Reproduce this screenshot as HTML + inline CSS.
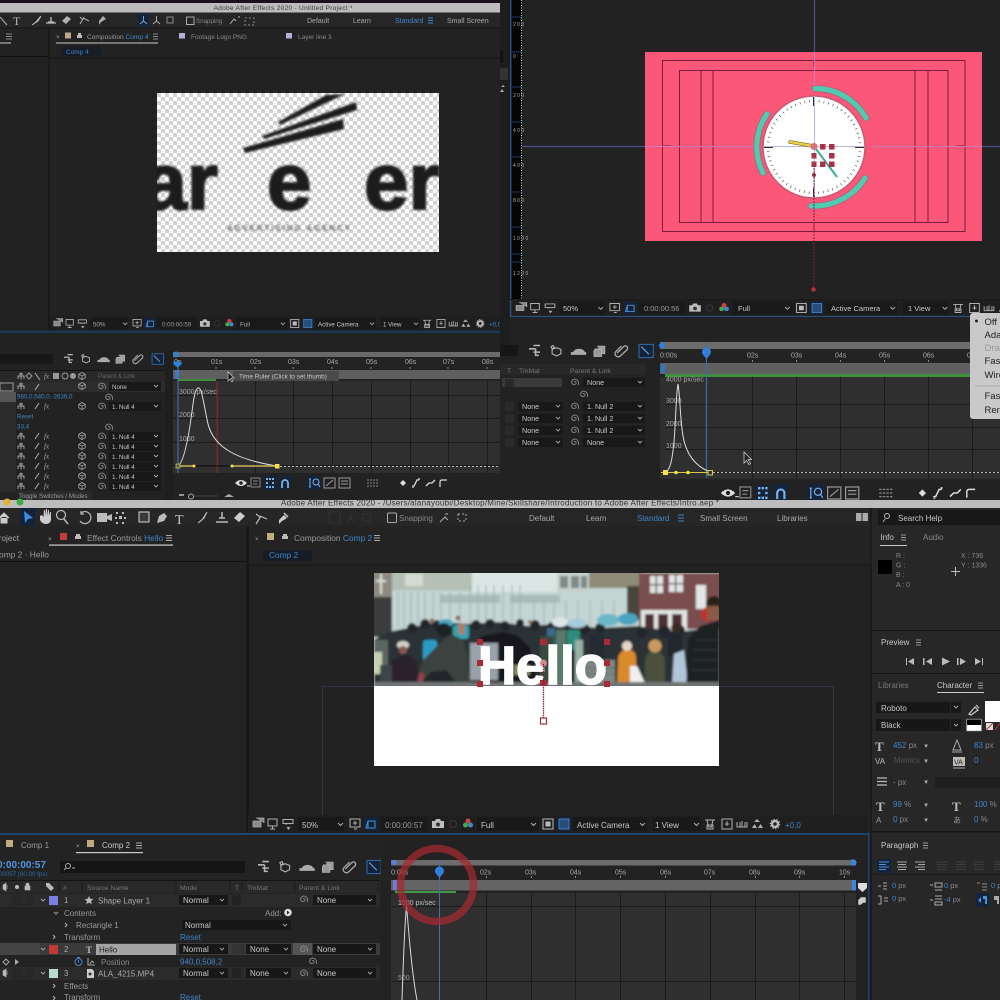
<!DOCTYPE html>
<html><head><meta charset="utf-8"><title>After Effects</title>
<style>
html,body{margin:0;padding:0;background:#1e1e1e;width:1000px;height:1000px;overflow:hidden}
svg{display:block;filter:blur(.3px)}
text{font-family:"Liberation Sans",sans-serif;fill:#a8a8a8;font-size:7px}
.s{font-size:6.2px}.m{font-size:8px}.l{font-size:8.4px}
.b{fill:#3f86c8}.d{fill:#666}.w{fill:#c8c8c8}
.ic{fill:none;stroke:#b0b0b0;stroke-width:1}
.if{fill:#b0b0b0}
.g{stroke:#1b1b1b;stroke-width:1;fill:none}
</style></head><body>
<svg width="1000" height="1000" viewBox="0 0 1000 1000" xmlns="http://www.w3.org/2000/svg">
<defs>
<pattern id="chk" width="8" height="8" patternUnits="userSpaceOnUse" x="157" y="93"><rect width="8" height="8" fill="#fff"/><rect width="4" height="4" fill="#d2d2d2"/><rect x="4" y="4" width="4" height="4" fill="#d2d2d2"/></pattern>
<clipPath id="imgc"><rect x="157" y="93" width="282" height="159"/></clipPath>
<clipPath id="photo"><rect x="374" y="573" width="345" height="113"/></clipPath>
<filter id="b1" x="-10%" y="-10%" width="120%" height="120%"><feGaussianBlur stdDeviation="1.100"/></filter>
<filter id="b2" x="-10%" y="-10%" width="120%" height="120%"><feGaussianBlur stdDeviation="1"/></filter>
<g id="sw"><path d="M0 0c1.2-1 2.6 0 2 1.500c-.8 1.800-4 1.300-4.300-1.100c-.3-2.500 2.300-4 4.500-3c2 1 3 3.300 2 5.500" fill="none" stroke="#8a8a8a" stroke-width=".9"/></g>
<path id="ch" d="M-2-1l2 2 2-2" fill="none" stroke="#aaa" stroke-width=".9"/>
<g id="cube"><path d="M0-3.500l3.200 1.800v3.500l-3.200 1.800-3.200-1.800v-3.500zM-3.200-1.700l3.200 1.800 3.200-1.800M0 .1v3.500" fill="none" stroke="#aaa" stroke-width=".8"/></g>
<g id="sh"><path d="M-3 3v-3h6v3M0-3.500v7M-2-2h4" fill="none" stroke="#aaa" stroke-width=".9"/></g>
<g id="vt">
 <rect x="-9" y="-9" width="620" height="18" fill="#1f1f1f"/>
 <path d="M4-5h8v5M1-2h8v6h-8z" fill="#8a8a8a" stroke="#aaa" stroke-width=".8" transform="translate(-5 -1)"/>
 <path d="M11-5h9v7h-9zM13 5h5M15.500 2v3" class="ic"/>
 <path d="M26-4.500h10v4h-10zM28-.5a2 2 0 0 0 2.500 0M32-.5a2 2 0 0 0 2 0" class="ic" stroke-width="1.500"/><path d="M29.500 3l2 3 2-3z" class="if"/>
 <rect x="41" y="-7" width="46" height="14" fill="#191919"/>
 <path d="M81-1l2.500 2.500 2.500-2.500" class="ic"/>
 <path d="M93-5h10v8h-10zM98-3v4M96-1h4M97 5h3" class="ic"/>
 <rect x="107" y="-7" width="14" height="14" fill="#13243a"/><path d="M109 4l2-7h7v7zM111-3v7" fill="none" stroke="#4d8fd0"/>
 <rect x="123" y="-7" width="48" height="14" fill="#1a1a1a"/>
 <path d="M175-3h3l1-2h4l1 2h3v7h-12z" fill="#bdbdbd"/><circle cx="181" cy="0.500" r="2" fill="#333"/>
 <circle cx="196" cy="0" r="3.500" fill="none" stroke="#3a3a3a"/>
 <circle cx="211" cy="-3" r="2.500" fill="#c44"/><circle cx="208.500" cy="1" r="2.500" fill="#4a4"/><circle cx="213.500" cy="1" r="2.500" fill="#48c"/>
 <rect x="220" y="-7" width="62" height="14" fill="#191919"/>
 <path d="M274-1l2.500 2.500 2.500-2.500" class="ic"/>
 <rect x="286" y="-5" width="10" height="10" fill="none" stroke="#bbb"/><rect x="288.500" y="-2.500" width="5" height="5" fill="#bbb"/>
 <rect x="300" y="-7" width="14" height="14" fill="#13243a"/><rect x="302" y="-5" width="10" height="10" fill="#284d78" stroke="#4d8fd0" stroke-width=".8"/>
 <rect x="316" y="-7" width="74" height="14" fill="#191919"/>
 <path d="M383-1l2.500 2.500 2.500-2.500" class="ic"/>
 <rect x="396" y="-7" width="47" height="14" fill="#191919"/>
 <path d="M437-1l2.500 2.500 2.500-2.500" class="ic"/>
 <path d="M448-4h10M450-4l1.500 7h3l1.500-7M450 1h6v4h-6z" class="ic"/>
 <path d="M465-5h10v10h-10zM470-3v5M468 0h4" class="ic"/>
 <path d="M480-2v5h10v-5M483 3v-5M485 3v-6M488 3v-5" class="ic"/>
 <path d="M500-5l3 3h-6zM495 4l2.500-4 2.500 4zM501 4l2.500-4 2.500 4z" class="if"/>
 <circle cx="518" cy="0" r="3" fill="none" stroke="#bbb" stroke-width="2.400"/><circle cx="518" cy="0" r="4.800" fill="none" stroke="#bbb" stroke-width="1" stroke-dasharray="1.500 1.500"/>
</g>
<g id="tli">
 <path d="M0-2h6M4-5h6M4 1h6M6-2v6h3" fill="none" stroke="#b5b5b5" stroke-width="1.400"/>
 <path d="M22-5l1 2-2 1-1-2zM25-3l4 1.500v4l-4 2-4-2v-4z" fill="none" stroke="#b5b5b5"/>
 <path d="M40 1a6 5 0 0 1 11 0zM38 1h14v2.500h-14zM45-5v2" fill="#aaa"/>
 <path d="M60-2h6v7h-7v-5zM62-4.500h7v7h-3" fill="#999" stroke="#bbb" stroke-width=".6"/>
 <path d="M80 3l6-6a2 2 0 0 1 3 3l-6.500 6a3 3 0 0 1-4-4l5.500-5.500" fill="none" stroke="#aaa" stroke-width="1.200" transform="translate(0 -1)"/>
 <rect x="100" y="-6" width="13" height="12" fill="#13243a" stroke="#2f68a0"/><path d="M102-4l7 7" stroke="#6ea6d8" fill="none"/>
</g>
<g id="gb">
 <path d="M-6 0q6-6 12 0q-6 6-12 0z" fill="#ddd"/><circle r="1.800" fill="#222"/><path d="M6 3h3" stroke="#ccc"/>
 <rect x="10" y="-5" width="9" height="9" fill="none" stroke="#888"/><path d="M12-2h5M12 1h4" stroke="#888"/>
 <rect x="23" y="-7" width="12" height="14" fill="#12233a"/><g fill="#7fb0e0"><rect x="25" y="-5" width="2" height="2"/><rect x="28" y="-5" width="2" height="2"/><rect x="31" y="-5" width="2" height="2"/><rect x="25" y="-1" width="2" height="2"/><rect x="31" y="-1" width="2" height="2"/><rect x="25" y="3" width="2" height="2"/><rect x="28" y="3" width="2" height="2"/><rect x="31" y="3" width="2" height="2"/></g>
 <rect x="38" y="-7" width="12" height="14" fill="#12233a"/><path d="M41 5v-5a3 3 0 0 1 6 0v5" fill="none" stroke="#7fb0e0" stroke-width="1.800"/>
 <rect x="66" y="-7" width="14" height="14" fill="#12233a"/><path d="M69-4v8M68-4h2M68 4h2" stroke="#7fb0e0" fill="none"/><circle cx="75" cy="-1" r="3" fill="none" stroke="#7fb0e0"/><path d="M77 1l2 3" stroke="#7fb0e0"/>
 <rect x="83" y="-5" width="11" height="10" fill="none" stroke="#999"/><path d="M85 3l7-6" stroke="#999"/>
 <rect x="98" y="-5" width="11" height="10" fill="none" stroke="#999"/><path d="M100-2h7M100 1h7" stroke="#999"/>
 <path d="M126-3h12M126 0h12M126 3h12" stroke="#888" stroke-dasharray="2 1"/>
 <path d="M162-3l3 3-3 3-3-3z" fill="#ddd"/><path d="M171 3h2l3-6h2M172 5v-1M178-3v-2" stroke="#ddd" fill="none" stroke-width="1.300"/>
 <path d="M185 3l3-3h3l3-3" stroke="#ddd" fill="none" stroke-width="1.300"/>
 <path d="M199 4v-5q0-2 2-2h5" stroke="#ddd" fill="none" stroke-width="1.200"/>
</g>
</defs>

<rect width="1000" height="1000" fill="#1c1c1c"/>

<!-- TOP LEFT -->
<rect width="510" height="3" fill="#1a1020"/>
<rect y="3" width="510" height="9.500" fill="#bcbcbc"/>
<text x="283" y="10" text-anchor="middle" style="fill:#3a3a3a;font-size:6.600px" textLength="139">Adobe After Effects 2020 - Untitled Project *</text>
<rect y="12.500" width="510" height="15" fill="#262626"/>
<g>
 <path d="M0 17l7 8" class="ic"/>
 <text x="13" y="25" style="font-family:'Liberation Serif',serif;font-size:12px;fill:#bbb">T</text>
 <path d="M32 25l4-3 5-6-3 5z" class="if" stroke="#bbb"/>
 <path d="M46 23h10M51 17v5M48 22h6" stroke="#bbb" fill="none" stroke-width="1.300"/>
 <path d="M62 21l5-5 4 3-5 5z" class="if"/>
 <path d="M80 24l4-7M83 18l6 3M80 17l3 3" class="ic"/>
 <path d="M99 21l4-5 3 3-5 3-2 3z" class="if"/>
 <rect x="138" y="14" width="11" height="12" fill="#13243a"/><path d="M143.500 16v5M143.500 21l-3.500 3M143.500 21l3.500 3" stroke="#6ea6d8" fill="none"/>
 <path d="M156.500 16v5l-3.500 3M156.500 21l3.500 3" class="ic"/>
 <path d="M167 17h6v6h-6z" fill="none" stroke="#888"/>
 <rect x="186.500" y="17" width="7.500" height="7.500" fill="none" stroke="#aaa"/>
 <path d="M230 24l4-5 2 2M240 17h-2" class="ic"/><path d="M245 18h9v7h-9z" fill="none" stroke="#888" stroke-dasharray="2 2"/>
</g>
<text x="196" y="23" class="s d" style="fill:#888">Snapping</text>
<text x="307" y="23">Default</text><text x="353" y="23">Learn</text><text x="395" y="23" class="b">Standard</text>
<path d="M428 18h5M428 20.500h5M428 23h5" stroke="#3f86c8"/>
<text x="447" y="23">Small Screen</text>
<rect y="27" width="510" height="30" fill="#222"/>
<rect x="0" y="27.500" width="510" height="1" fill="#151515"/>
<path d="M6 34h6M6 36.500h6M6 39h6" stroke="#888"/><rect x="0" y="42.500" width="11" height="1" fill="#ccc"/>
<text x="56" y="39" class="s">×</text>
<rect x="65" y="32.500" width="6" height="6" fill="#b9a58a"/><path d="M77 38v-3h5v3zM78 35v-2h3v2" fill="#bbb"/>
<text x="87" y="39" class="s" style="fill:#999;font-size:6.600px">Composition <tspan class="b">Comp 4</tspan></text>
<path d="M153 34h5M153 36.500h5M153 39h5" stroke="#888"/><rect x="56" y="42.500" width="102" height="1" fill="#ccc"/>
<rect x="179" y="33" width="6" height="5.500" fill="#b5aedb"/><text x="191" y="39" class="s" style="fill:#888;font-size:6.500px">Footage Logo PNG</text>
<rect x="286" y="33" width="6" height="5.500" fill="#b5aedb"/><text x="298" y="39" class="s" style="fill:#888;font-size:6.500px">Layer line 3</text>
<rect x="62" y="47" width="39" height="9" fill="#171c26"/><text x="66" y="54" class="s b" style="font-size:6.500px">Comp 4</text>
<rect x="0" y="56" width="48" height="1" fill="#111"/><rect x="50" y="58" width="460" height="1" fill="#191919"/>
<rect x="48" y="27" width="2" height="305" fill="#191919"/>
<rect x="0" y="57" width="48" height="275" fill="#212121"/>
<rect x="50" y="59" width="455" height="259" fill="#222"/>
<rect x="157" y="93" width="282" height="159" fill="url(#chk)"/>
<g clip-path="url(#imgc)"><g filter="url(#b1)" fill="#1c1c1c">
 <polygon points="243,148 343,119 344,129 245,153"/>
 <polygon points="262,136 356,102 357,110 264,139"/>
 <polygon points="278,122 326,95 345,94 280,125"/>
 <text x="218" y="209" text-anchor="end" style="font-size:80px;font-weight:bold;fill:#1c1c1c;stroke:#1c1c1c;stroke-width:2px">ar</text>
 <text x="267" y="209" style="font-size:80px;font-weight:bold;fill:#1c1c1c;stroke:#1c1c1c;stroke-width:2px">e</text>
 <text x="364" y="209" style="font-size:80px;font-weight:bold;fill:#1c1c1c;stroke:#1c1c1c;stroke-width:2px">er</text>
 <text x="227" y="231" style="font-size:8px;font-weight:bold;fill:#666;letter-spacing:1.900px">ADVERTISING AGENCY</text>
</g></g>
<use href="#vt" transform="translate(57 323.500) scale(.817)"/>
<text x="93" y="326.500" class="s" style="fill:#aaa">50%</text>
<text x="162" y="326.500" class="s" style="fill:#999">0:00:00:59</text>
<text x="240" y="326.500" class="s">Full</text>
<text x="318" y="326.500" class="s w">Active Camera</text>
<text x="383" y="326.500" class="s w">1 View</text>
<text x="489" y="326.500" class="s b">+0,0</text>
<rect y="330.500" width="510" height="2.500" fill="#1c3654"/>
<rect y="333" width="510" height="167" fill="#222"/>
<!-- TL timeline -->
<rect x="0" y="354" width="53" height="10" fill="#171717"/>
<use href="#tli" transform="translate(64 359) scale(.88)"/>
<rect x="0" y="371" width="170" height="11" fill="#282828"/>
<rect x="0" y="370" width="175" height="1" fill="#141414"/>
<g class="s" style="fill:#777">
 <use href="#sh" x="21" y="376"/><path d="M29 373l3 3-3 3-3-3z" fill="none" stroke="#999"/><path d="M35 373l5 7" class="ic"/>
 <text x="44" y="378.500" style="font-family:'Liberation Serif',serif;font-style:italic;font-size:7px">fx</text>
 <rect x="53" y="373" width="6" height="6" fill="#999"/><circle cx="65" cy="376" r="3" fill="none" stroke="#999"/><circle cx="73" cy="376" r="3" fill="#999"/><use href="#cube" x="82" y="376"/>
</g>
<text x="98" y="378" class="s" style="fill:#666">Parent &amp; Link</text>
<rect x="0" y="382" width="170" height="10" fill="#2d2d2d"/>
<rect x="0" y="383" width="13" height="8" fill="none" stroke="#999"/>
<rect x="0" y="392" width="16" height="10" fill="#555"/>
<rect x="0" y="402" width="16" height="90" fill="#2b2b2b"/>
<use href="#sh" x="21" y="386"/><path d="M35 390l4-6" class="ic"/><use href="#cube" x="82" y="386"/><use href="#sw" x="101" y="386"/>
<rect x="109" y="382" width="52" height="9" fill="#181818"/><text x="112" y="389" class="s w">None</text><use href="#ch" x="156" y="386"/>
<text x="17" y="398.500" class="s b">960,0,540,0,-2636,0</text><use href="#sw" x="108" y="397"/>
<text x="17" y="418.500" class="s b">Reset</text>
<text x="17" y="428.500" class="s b">33,4</text><use href="#sw" x="108" y="427"/>
<!-- null rows -->
<g id="nr"><use href="#sh" x="21" y="406"/><path d="M35 409l4-6" class="ic"/><text x="44" y="408.500" style="font-family:'Liberation Serif',serif;font-style:italic;font-size:7px">fx</text><use href="#cube" x="82" y="406"/><use href="#sw" x="101" y="406"/><rect x="109" y="402" width="52" height="9" fill="#181818"/><text x="112" y="409" class="s w">1. Null 4</text><use href="#ch" x="156" y="406"/></g>
<use href="#nr" y="30"/><use href="#nr" y="40"/><use href="#nr" y="50"/><use href="#nr" y="60"/><use href="#nr" y="70"/><use href="#nr" y="80"/>
<rect x="17" y="491" width="75" height="9" fill="#2a2a2a"/><text x="19" y="498" class="s" style="fill:#999">Toggle Switches / Modes</text>
<rect x="165" y="350" width="8" height="150" fill="#1f1f1f"/>
<rect x="173" y="352" width="327" height="5" fill="#6a6a6a"/><circle cx="176" cy="354.500" r="3" fill="#3a7fc4"/>
<rect x="173" y="358" width="327" height="11" fill="#232323"/>
<g class="s" style="fill:#888"><text x="211" y="364">01s</text><text x="250" y="364">02s</text><text x="288" y="364">03s</text><text x="327" y="364">04s</text><text x="366" y="364">05s</text><text x="405" y="364">06s</text><text x="443" y="364">07s</text><text x="482" y="364">08s</text><text x="174" y="364">0s</text></g>
<path d="M216 367v2M255 367v2M293 367v2M332 367v2M371 367v2M410 367v2M448 367v2M487 367v2" stroke="#888"/>
<rect x="173" y="370" width="327" height="9" fill="#5f5f5f"/>
<rect x="175" y="370" width="4" height="9" fill="#3f78bc"/>
<rect x="178" y="379" width="38" height="2" fill="#3f8f3f"/>
<rect x="173" y="381" width="327" height="92" fill="#2f2f2f"/>
<path d="M255.500 381v92M293.500 381v92M332.500 381v92M371.500 381v92M410.500 381v92M448.500 381v92M487.500 381v92M216.500 381v92M173 395.500h327M173 418.500h327M173 442.500h327M173 465.500h327" class="g"/>
<path d="M178 360v113" stroke="#3f78bc"/><path d="M217 381v92" stroke="#a03434"/>
<path d="M173.500 361.500h8v3l-4 3-4-3z" fill="#2f80d8"/>
<g class="s" style="fill:#999"><text x="179" y="394">3000 px/sec</text><text x="179" y="417">2000</text><text x="179" y="441">1000</text></g>
<path d="M178 466c6-4 11-30 15-62c2-14 4-17 6-16c3 1 5 18 9 36c6 24 30 36 69 42" fill="none" stroke="#dcdcdc" stroke-width="1"/>
<path d="M176 466h101" stroke="#111"/><path d="M178 466h16M232 466h45" stroke="#c9b95a" stroke-width="1.500"/>
<rect x="176" y="464" width="4" height="4" fill="#555" stroke="#ddd050" stroke-width=".7"/><circle cx="194" cy="466" r="1.500" fill="#f2e14a"/><circle cx="232" cy="466" r="1.500" fill="#f2e14a"/><rect x="275" y="464" width="4.500" height="4.500" fill="#f2e14a"/>
<path d="M280 466.500h220" stroke="#bbb" stroke-dasharray="2 2"/>
<rect x="233" y="371" width="106" height="10" fill="#4a4a4a"/><text x="239" y="378.500" class="s w" style="font-size:6.400px">Time Ruler (Click to set thumb)</text>
<path d="M228 372v9l2-2 2 3 1-1-2-3h3z" fill="#111" stroke="#ddd" stroke-width=".6"/>
<use href="#gb" transform="translate(241 483)"/>
<path d="M179 495h5" stroke="#bbb" stroke-width="1.500"/><circle cx="191" cy="496.500" r="2.500" fill="none" stroke="#aaa"/><path d="M194 496h24" stroke="#444"/><path d="M224 497l5-3 5 3z" fill="#aaa"/>

<!-- TOP RIGHT -->
<rect x="500" y="0" width="10" height="345" fill="#1d1d1d"/>
<rect x="500" y="50" width="3" height="12" fill="#111"/><rect x="500" y="68" width="8" height="12" fill="#333"/>
<path d="M503 85l2 2h-4zM500 92l2-3 2 3z" fill="#aaa"/>
<rect x="510" y="0" width="490" height="316" fill="#222"/>
<rect x="510" y="0" width="1.500" height="316" fill="#2a5080"/>
<rect x="511.500" y="0" width="10.500" height="300" fill="#050505"/>
<path d="M521.500 0v300" stroke="#ddd" stroke-dasharray="1 1.500"/>
<g style="font-size:5px;fill:#777"><text x="513" y="26" style="font-size:5px">2 0 0</text><text x="513" y="58" style="font-size:5px">0</text><text x="513" y="97" style="font-size:5px">2 0 0</text><text x="513" y="132" style="font-size:5px">4 0 0</text><text x="513" y="167" style="font-size:5px">4 0 0</text><text x="513" y="202" style="font-size:5px">8 0 0</text><text x="513" y="240" style="font-size:5px">1 0 0 0</text><text x="513" y="275" style="font-size:5px">1 2 0 0</text></g>
<path d="M512 17h10M512 52h10M512 87h10M512 122h10M512 157h10M512 192h10M512 227h10M512 254h10M512 262h10" stroke="#2a4a70" stroke-width=".7"/>
<path d="M814.500 0v52M522 146.500h123M982 146.500h18" stroke="#4d4d8a" stroke-width="1.200"/>
<rect x="645" y="52" width="337" height="189" fill="#fb5779"/>
<g fill="none" stroke="#7d1d3e" stroke-width="1">
 <rect x="662.500" y="60.500" width="302.500" height="171"/>
 <rect x="679.500" y="70.500" width="268.500" height="152"/>
 <path d="M701 70v152M713 70v152M915 70v152M928 70v152"/>
 <path d="M662 146h9M956 146h9M814 61v6M814 222v10"/>
</g>
<path d="M814.500 52v37M645 146.500h110M873 146.500h109" stroke="#cf78b4" stroke-width="1"/>
<circle cx="814" cy="147" r="51" fill="#fff" stroke="#c65a75" stroke-width="1.500"/>
<circle cx="814" cy="147" r="46" fill="none" stroke="#444" stroke-width="2.500" stroke-dasharray=".6 4.218" stroke-dashoffset=".3"/>
<path d="M814 97v9M814 188v9M764 147h9M855 147h9" stroke="#111" stroke-width="1.800"/>
<path d="M814.500 96v100M764 146.500h100" stroke="#b8b8d6" stroke-width="1"/>
<g fill="none" stroke-linecap="round">
<path d="M815 88.500A58.500 58.500 0 0 1 866 118" stroke="#c05a78" stroke-width="7"/><path d="M815 88.500A58.500 58.500 0 0 1 866 118" stroke="#4fcbb0" stroke-width="5.200"/>
<path d="M767 114A58 58 0 0 0 763 173" stroke="#c05a78" stroke-width="7"/><path d="M767 114A58 58 0 0 0 763 173" stroke="#4fcbb0" stroke-width="5.200"/>
<path d="M811 206A60 60 0 0 0 865 178" stroke="#c05a78" stroke-width="7"/><path d="M811 206A60 60 0 0 0 865 178" stroke="#4fcbb0" stroke-width="5.200"/>
</g>
<path d="M790 142l23 4" stroke="#7a6a20" stroke-width="3.500" stroke-linecap="round"/><path d="M790 142l23 4" stroke="#ecd24a" stroke-width="2.200" stroke-linecap="round"/>
<path d="M816 149l21 28" stroke="#3dac96" stroke-width="2"/>
<g fill="#a93248"><circle cx="814" cy="146.500" r="3.500" fill="#d9707f"/><rect x="820" y="144" width="5.500" height="5.500"/><rect x="829" y="144" width="5.500" height="5.500"/><rect x="811.500" y="153" width="5" height="5.500"/><rect x="829" y="153" width="5.500" height="5.500"/><rect x="811.500" y="161.500" width="5" height="5.500"/><rect x="820" y="161.500" width="5.500" height="5.500"/><rect x="829" y="161.500" width="5.500" height="5.500"/><circle cx="814" cy="175" r="2"/></g>
<path d="M814 168v122" stroke="#7d1d3e" stroke-width="1" stroke-dasharray="2 1"/><circle cx="813.500" cy="289.500" r="2.200" fill="#b5304a"/>
<use href="#vt" transform="translate(520 308) scale(.967 .9)"/>
<path d="M510 299.500h490" stroke="#1a1a1a"/>
<text x="563" y="311" class="m w" style="font-size:7.500px">50%</text>
<text x="644" y="311" class="m" style="font-size:7.500px;fill:#999">0:00:00:56</text>
<text x="738" y="311" class="m w" style="font-size:7.500px">Full</text>
<text x="831" y="311" class="m w" style="font-size:7.500px">Active Camera</text>
<text x="908" y="311" class="m w" style="font-size:7.500px">1 View</text>
<path d="M510.500 300v16.500H1000" fill="none" stroke="#2a5080" stroke-width="1.300"/>
<rect x="510" y="318" width="490" height="182" fill="#222"/>
<rect x="500" y="345" width="18" height="11" fill="#161616"/>
<use href="#tli" transform="translate(529 351) scale(1.100)"/>
<rect x="660" y="342" width="340" height="7" fill="#6c6c6c"/><circle cx="662" cy="345.500" r="3" fill="#2f80d8"/>
<rect x="660" y="349" width="340" height="14" fill="#232323"/>
<g style="fill:#999"><text x="660" y="357.500" style="font-size:7px;fill:#aaa">0:00s</text><text x="747" y="357.500" style="fill:#aaa">02s</text><text x="791" y="357.500" style="fill:#aaa">03s</text><text x="835" y="357.500" style="fill:#aaa">04s</text><text x="879" y="357.500" style="fill:#aaa">05s</text><text x="923" y="357.500" style="fill:#aaa">06s</text><text x="967" y="357.500" style="fill:#aaa">0</text></g>
<path d="M752.500 360v2M796.500 360v2M840.500 360v2M884.500 360v2M928.500 360v2" stroke="#888"/>
<rect x="660" y="363" width="340" height="11" fill="#606060"/><rect x="661" y="364" width="4" height="9" rx="1.500" fill="#2f78c8"/>
<rect x="665" y="374" width="335" height="3" fill="#3f8f3f"/>
<rect x="660" y="377" width="340" height="102" fill="#2f2f2f"/>
<path d="M752.500 377v102M796.500 377v102M840.500 377v102M884.500 377v102M928.500 377v102M972.500 377v102M665 404.500h335M665 427.500h335M665 449.500h335M665 472.500h335" class="g"/>
<path d="M706.500 343v135" stroke="#3a6ea8" stroke-width="1.200"/>
<path d="M702 352a4.500 4.500 0 0 1 9 0c0 2-2 4-4.500 7c-2.500-3-4.500-5-4.500-7z" fill="#2f80d8"/>
<g style="fill:#999"><text x="666" y="381.500" style="fill:#aaa">4000 px/sec</text><text x="666" y="403">3000</text><text x="666" y="426">2000</text><text x="666" y="448">1000</text></g>
<path d="M666 472c4-3 6-10 8-30c2-24 2-48 4-58c2 10 2 34 5 52c3 18 12 30 27 36" fill="none" stroke="#dcdcdc" stroke-width="1"/>
<path d="M661 472.500h49" stroke="#d8c94a"/><rect x="663" y="470" width="5" height="5" fill="#f2e14a"/><circle cx="676" cy="472.500" r="1.800" fill="#f2e14a"/><circle cx="688" cy="472.500" r="1.800" fill="#f2e14a"/><rect x="708" y="470.500" width="4.500" height="4.500" fill="#333" stroke="#d8c94a"/>
<path d="M713 472.500h287" stroke="#bbb" stroke-dasharray="2 2"/>
<path d="M744 452v11l2.500-2.500 2.500 4 1.500-1-2.500-4h3.500z" fill="#222" stroke="#ddd" stroke-width=".7"/>
<use href="#gb" transform="translate(728 493) scale(1.200)"/>
<rect x="500" y="364" width="146" height="11" fill="#282828"/>
<text x="507" y="373" class="s" style="fill:#777;font-size:6.800px">T</text><text x="519" y="373" class="s" style="fill:#777;font-size:6.800px">TrkMat</text><text x="570" y="373" class="s" style="fill:#777;font-size:6.800px">Parent &amp; Link</text>
<rect x="502" y="378" width="60" height="9" fill="#3a3a3a"/>
<rect x="505" y="379" width="9" height="8" fill="#2a2a2a"/>
<use href="#sw" x="574" y="382"/><use href="#sw" x="583" y="394"/>
<rect x="583" y="378" width="62" height="9" fill="#181818"/><text x="587" y="385" class="s w" style="font-size:7.200px">None</text><use href="#ch" x="640" y="382"/>
<g id="rr"><rect x="505" y="402" width="9" height="9" fill="#2a2a2a"/><rect x="518" y="402" width="45" height="9" fill="#181818"/><text x="522" y="409" style="font-size:7.200px;fill:#c8c8c8">None</text><use href="#ch" x="558" y="406"/><use href="#sw" x="574" y="406"/><rect x="583" y="402" width="62" height="9" fill="#181818"/><text x="587" y="409" style="font-size:7.200px;fill:#c8c8c8">1. Null 2</text><use href="#ch" x="640" y="406"/></g>
<use href="#rr" y="12"/><use href="#rr" y="24"/>
<rect x="505" y="438" width="9" height="9" fill="#2a2a2a"/><rect x="518" y="438" width="45" height="9" fill="#181818"/><text x="522" y="445" style="font-size:7.200px;fill:#c8c8c8">None</text><use href="#ch" x="558" y="442"/><use href="#sw" x="574" y="442"/><rect x="583" y="438" width="62" height="9" fill="#181818"/><text x="587" y="445" style="font-size:7.200px;fill:#c8c8c8">None</text><use href="#ch" x="640" y="442"/>
<rect x="970" y="313" width="40" height="106" rx="3" fill="#c9c9c9"/>
<circle cx="976.500" cy="321" r="1.500" fill="#222"/>
<g style="font-size:9.500px"><text x="984.500" y="325" style="fill:#222;font-size:9.500px">Off</text><text x="984.500" y="338" style="fill:#222;font-size:9.500px">Adaptive</text><text x="984.500" y="351" style="fill:#999;font-size:9.500px">Draft</text><text x="984.500" y="364" style="fill:#222;font-size:9.500px">Fast</text><text x="984.500" y="378" style="fill:#222;font-size:9.500px">Wireframe</text><text x="984.500" y="399" style="fill:#222;font-size:9.500px">Fast</text><text x="984.500" y="413" style="fill:#222;font-size:9.500px">Renderer</text></g>
<path d="M975 386h25" stroke="#aaa"/>

<!-- BOTTOM TITLE BAR -->
<rect y="500" width="1000" height="8" fill="#bdbdbd"/>
<circle cx="7" cy="502" r="3.500" fill="#e0b030"/><circle cx="20" cy="502" r="3.500" fill="#3fae48"/>
<text x="281" y="505.500" style="fill:#333;font-size:8px" textLength="438">Adobe After Effects 2020 - /Users/alanayoubi/Desktop/Mine/Skillshare/Introduction to Adobe After Effects/Intro.aep *</text>
<rect y="508" width="1000" height="18" fill="#262626"/>
<!-- Main toolbar -->
<g>
 <path d="M-1 518l5-5 5 5M1 517v6h6v-6" fill="#ccc" stroke="#ccc"/>
 <rect x="20" y="508" width="15" height="18" fill="#13243a"/><path d="M24 511l9 7-5 1-3 4z" fill="#3b8be0"/>
 <path d="M40 516v4q2 4 6 4t5-4v-8l-1 0-1 4v-6h-1l-1 6v-7h-1l-1 7v-6h-1l-.5 7-1.500-2z" fill="#ccc"/>
 <circle cx="61" cy="515" r="4.500" fill="none" stroke="#bbb" stroke-width="1.200"/><path d="M64 519l4 5" stroke="#bbb" stroke-width="1.500"/>
 <path d="M81 513a6 6 0 1 1-1 8M81 511v3h3" fill="none" stroke="#bbb" stroke-width="1.200"/>
 <path d="M97 513h10v9h-10zM107 516l5-2v7l-5-2z" fill="#bbb"/>
 <g fill="#bbb"><rect x="116" y="512" width="2" height="2"/><rect x="122" y="512" width="2" height="2"/><rect x="124" y="517" width="2" height="2"/><rect x="122" y="522" width="2" height="2"/><rect x="116" y="522" width="2" height="2"/><rect x="115" y="517" width="2" height="2"/><rect x="119" y="516" width="3" height="3"/></g>
 <rect x="139" y="512" width="10" height="10" fill="#3a3a3a" stroke="#bbb" stroke-width="1.200"/>
 <path d="M157 523l2-7 5-3 3 3-3 5z" fill="#bbb"/>
 <text x="175" y="524" style="font-family:'Liberation Serif',serif;font-size:14px;fill:#c0c0c0">T</text>
 <path d="M198 523l4-3 5-8-3 6z" fill="#bbb" stroke="#bbb"/>
 <path d="M216 522h12M222 512v6M219 518h6" stroke="#bbb" stroke-width="1.500" fill="none"/>
 <path d="M234 518l6-6 5 4-6 6z" fill="#ccc"/>
 <path d="M256 524l5-8M260 516l7 3M256 514l4 3" fill="none" stroke="#bbb" stroke-width="1.200"/>
 <path d="M279 520l5-5 3 3-5 3-3 3z" fill="#ccc"/><path d="M284 513l4 4" stroke="#ccc" stroke-width="1.500"/>
 <rect x="329" y="512" width="11" height="11" fill="none" stroke="#333"/><path d="M351 513v5l-4 4M351 518l4 4" stroke="#333" fill="none"/><path d="M363 514h7v7h-7z" stroke="#333" fill="none"/>
 <rect x="387.500" y="513" width="9" height="9.500" rx="1" fill="none" stroke="#aaa"/>
 <path d="M440 522l5-5 3 3M448 514l-3 0" class="ic"/><path d="M458 514h8v7h-8z" fill="none" stroke="#aaa" stroke-dasharray="2 2"/>
</g>
<text x="399" y="521" class="m" style="fill:#888">Snapping</text>
<text x="529" y="521" class="m">Default</text><text x="586" y="521" class="m">Learn</text><text x="637" y="521" class="m b">Standard</text>
<path d="M678 515h6M678 518h6M678 521h6" stroke="#3f86c8"/>
<text x="700" y="521" class="m">Small Screen</text><text x="777" y="521" class="m">Libraries</text>
<rect x="856" y="513" width="12" height="8" fill="#aaa"/><path d="M862 513v8" stroke="#222"/>
<rect x="870" y="508" width="1.500" height="18" fill="#151515"/>
<rect x="878" y="510" width="122" height="15" fill="#181818"/>
<circle cx="887" cy="516" r="2.500" fill="none" stroke="#bbb"/><path d="M885 519l-2 3" stroke="#bbb"/>
<text x="898" y="521" class="m w">Search Help</text>

<!-- Left panel -->
<rect y="526" width="246" height="307" fill="#232323"/>
<text x="-7" y="541" class="l">Project</text>
<text x="48" y="541" class="s">×</text>
<rect x="60" y="533" width="7" height="7" fill="#c23a3a"/>
<path d="M75 539v-3h6v3zM76 536v-2h4v2" fill="#bbb"/>
<text x="87" y="541" class="l" style="fill:#999">Effect Controls <tspan class="b">Hello</tspan></text>
<path d="M166 535.500h6M166 538h6M166 540.500h6" stroke="#aaa"/>
<rect x="49" y="544.500" width="124" height="1.200" fill="#ccc"/>
<text x="-7" y="557.500" class="l" style="fill:#999">Comp 2 · Hello</text>
<rect y="561" width="246" height="1" fill="#111"/>
<rect x="246" y="526" width="3" height="307" fill="#181818"/>
<!-- Comp panel -->
<rect x="249" y="526" width="621" height="307" fill="#232323"/>
<text x="255" y="541" class="s">×</text>
<rect x="267" y="533" width="7" height="7" fill="#c0ac80"/>
<path d="M282 539v-3h6v3zM283 536v-2h4v2" fill="#bbb"/>
<text x="294" y="541" class="l" style="fill:#999">Composition <tspan class="b">Comp 2</tspan></text>
<path d="M374 535.500h6M374 538h6M374 540.500h6" stroke="#aaa"/>
<rect x="263" y="550" width="49" height="11" fill="#171c26"/>
<text x="269" y="558" class="l b">Comp 2</text>
<rect x="249" y="564.500" width="621" height="1" fill="#161616"/>
<rect x="249" y="566" width="619" height="250" fill="#222"/>
<rect x="322.500" y="686.500" width="511" height="130" fill="none" stroke="#33344a"/>
<!-- photo -->
<rect x="374" y="573" width="345" height="193" fill="#fff"/>
<g clip-path="url(#photo)"><g filter="url(#b2)">
 <rect x="370" y="570" width="355" height="120" fill="#c2d3d1"/>
 <!-- sky/upper buildings -->
 <rect x="392" y="570" width="80" height="20" fill="#b4bfb6"/>
 <rect x="405" y="574" width="18" height="12" fill="#d4dad4"/>
 <rect x="472" y="570" width="85" height="22" fill="#dbe6e4"/>
 <rect x="557" y="570" width="32" height="22" fill="#c8d0cc"/><rect x="560" y="576" width="8" height="12" fill="#7b8a88"/><rect x="571" y="576" width="8" height="12" fill="#7b8a88"/><rect x="581" y="576" width="6" height="12" fill="#7b8a88"/>
 <rect x="589" y="570" width="52" height="18" fill="#8e8c76"/>
 <rect x="627" y="586" width="13" height="34" fill="#4a463c"/>
 <!-- left dark -->
 <rect x="370" y="570" width="22" height="30" fill="#8c8a80"/>
 <rect x="370" y="597" width="22" height="40" fill="#3a3c3c"/>
 <path d="M381 574v20M376 581h10" stroke="#e0e0dc" stroke-width="2"/>
 <!-- monument -->
 <rect x="392" y="592" width="234" height="32" fill="#c4d6d4"/>
 <rect x="440" y="595" width="60" height="8" fill="#aabbb8"/><rect x="510" y="595" width="50" height="8" fill="#aabbb8"/>
 <path d="M398 592v34M404 592v34M411 592v34M418 592v34M425 592v34M433 592v34M441 592v34M450 592v34M460 592v34M470 585v40M478 585v40M486 585v40M494 585v40M503 585v40M512 585v40M520 585v40M534 600v25M544 600v25M554 600v25M566 600v25M578 600v25M590 600v25M602 600v25M614 600v25" stroke="#9fb4b3" stroke-width="1.100"/>
 <!-- brick -->
 <rect x="639" y="573" width="84" height="56" fill="#7a4d50"/>
 <g fill="#e2e6e4"><rect x="650" y="576" width="13" height="17"/><rect x="669" y="575" width="14" height="17"/><rect x="696" y="585" width="10" height="24"/><rect x="641" y="610" width="46" height="22"/></g>
 <g fill="#6a4a4c"><rect x="655.500" y="576" width="1.500" height="17"/><rect x="675" y="575" width="1.500" height="17"/><rect x="650" y="584" width="13" height="1.500"/><rect x="669" y="583" width="14" height="1.500"/></g>
 <g fill="#4e2f30"><rect x="645" y="614" width="9" height="18"/><rect x="658" y="614" width="10" height="18"/><rect x="672" y="614" width="10" height="18"/></g>
 <!-- crowd mass -->
 <path d="M374 640l14-8 20-4 30-6 30 2 30-2 30 4 30-2 40 4 40-2 40 6 32-4v70H374z" fill="#2c3136"/>
 <g fill="#20252a"><circle cx="412" cy="628" r="5"/><circle cx="425" cy="624" r="5"/><circle cx="437" cy="625" r="5"/><circle cx="476" cy="625" r="5"/><circle cx="490" cy="624" r="5"/><circle cx="505" cy="626" r="5"/><circle cx="520" cy="623" r="4"/><circle cx="535" cy="625" r="5"/><circle cx="552" cy="627" r="5"/><circle cx="585" cy="629" r="5"/><circle cx="600" cy="628" r="5"/><circle cx="642" cy="633" r="5"/><circle cx="665" cy="632" r="6"/><circle cx="680" cy="630" r="5"/></g>
 <g fill="#8a6a5a"><circle cx="432" cy="621" r="2.500"/><circle cx="458" cy="618" r="2.500"/><circle cx="530" cy="622" r="2"/><circle cx="560" cy="624" r="2"/><circle cx="676" cy="628" r="2.500"/></g>
 <!-- umbrellas -->
 <ellipse cx="560" cy="622" rx="8" ry="5" fill="#dde6e6"/><ellipse cx="577" cy="623" rx="10" ry="5" fill="#a9cdd8"/>
 <ellipse cx="608" cy="620" rx="11" ry="6" fill="#6cb8c8"/><ellipse cx="628" cy="619" rx="10" ry="6" fill="#4aa4c0"/>
 <ellipse cx="446" cy="623" rx="7" ry="4" fill="#49a9c4"/>
 <!-- teal coats -->
 <rect x="453" y="625" width="16" height="14" rx="3" fill="#37a0ae"/><rect x="459" y="624" width="5" height="10" fill="#c07850"/>
 <rect x="423" y="640" width="14" height="24" rx="3" fill="#2b9cc4"/>
 <rect x="567" y="630" width="13" height="20" rx="2" fill="#2f8c7a"/><rect x="547" y="628" width="8" height="18" fill="#3a6a8a"/>
 <!-- hat guy -->
 <ellipse cx="403" cy="645" rx="6" ry="4" fill="#d4d4cc"/><circle cx="403" cy="650" r="4" fill="#8a5a50"/>
 <path d="M390 686l2-26 14-6 10 6 6 26z" fill="#29232a"/>
 <rect x="374" y="640" width="14" height="30" fill="#5c6560"/><rect x="374" y="652" width="8" height="22" fill="#c8d0b0"/>
 <rect x="380" y="665" width="12" height="20" fill="#3c4448"/>
 <!-- cyclist -->
 <path d="M415 686l8-26 14-14 14-12 12 6 4 14 3 32z" fill="#3a4240"/><circle cx="444" cy="630" r="7" fill="#1e2224"/>
 <path d="M420 686l10-14 16-2 14 16z" fill="#22282a"/>
 <path d="M418 680l2-8 4 2-2 10z" fill="#a03a4a"/>
 <!-- mound -->
 <path d="M472 650l10-14 22-4 14 4 12 12 8 38h-66z" fill="#14161a"/>
 <rect x="470" y="643" width="28" height="37" fill="#98a2a8"/>
 <rect x="514" y="665" width="16" height="10" fill="#8a8e60"/>
 <!-- mid figures -->
 <rect x="540" y="636" width="14" height="46" fill="#374a3c"/><rect x="556" y="630" width="10" height="52" fill="#5a7a6c"/><rect x="575" y="640" width="8" height="42" fill="#9ab0a4"/>
 <rect x="590" y="635" width="14" height="25" fill="#262a30"/><rect x="585" y="660" width="30" height="22" fill="#7d8884"/>
 <path d="M585 668h30M585 674h30" stroke="#5a625e"/>
 <!-- orange -->
 <path d="M617 686l1-28q2-8 8-8h4q6 1 6 8l1 28z" fill="#d98a2c"/><circle cx="627" cy="646" r="5" fill="#e6d8c4"/>
 <path d="M630 666l7 0 8 17-15 1z" fill="#f0f0ec"/>
 <!-- olive -->
 <path d="M645 686v-26q2-8 10-10 8 2 10 10v26z" fill="#4c503e"/><circle cx="655" cy="646" r="6.500" fill="#c89a60"/>
 <rect x="668" y="632" width="14" height="24" fill="#22282e"/><circle cx="676" cy="628" r="5" fill="#3a2a24"/>
 <path d="M672 686l2-32 10-4 4 36z" fill="#b2c6da"/>
 <!-- right guy -->
 <path d="M686 690l2-50 12-14 20-6v70z" fill="#1c2024"/>
 <path d="M695 640h24M693 650h26M692 660h27M691 670h28" stroke="#2e3338" stroke-width="1.500"/>
 <circle cx="708" cy="614" r="7" fill="#c42e2e"/><circle cx="714" cy="604" r="8" fill="#2a2018"/><rect x="707" y="606" width="12" height="14" fill="#8a5a44"/>
 <!-- ground -->
 <rect x="374" y="682" width="345" height="5" fill="#6f7474"/>
</g></g>
<text x="478" y="684" style="font-size:54px;font-weight:bold;fill:#fff;stroke:#fff;stroke-width:1.600px" textLength="129" lengthAdjust="spacingAndGlyphs">Hello</text>
<g fill="#a82a36"><rect x="477" y="639" width="6" height="6"/><rect x="540" y="639" width="7" height="6"/><rect x="604" y="639" width="6" height="6"/><rect x="477" y="660" width="6" height="6"/><rect x="604" y="660" width="6" height="6"/><rect x="477" y="681" width="6" height="6"/><rect x="540" y="680" width="7" height="6"/><rect x="604" y="681" width="6" height="6"/></g>
<circle cx="543.500" cy="663" r="3.500" fill="#d08a90"/>
<path d="M543.500 664v55" stroke="#8a2030" stroke-width="1.300" stroke-dasharray="1.500 .8"/>
<rect x="540.500" y="718" width="6" height="6" fill="#fff" stroke="#a82a36" stroke-width="1.200"/>
<use href="#vt" transform="translate(257 824)"/>
<text x="302" y="828" class="m w">50%</text>
<text x="385" y="828" class="m" style="fill:#999">0:00:00:57</text>
<text x="481" y="828" class="m w">Full</text>
<text x="577" y="828" class="m w">Active Camera</text>
<text x="655" y="828" class="m w">1 View</text>
<text x="785" y="828" class="m b">+0,0</text>
<rect y="833" width="870" height="2" fill="#1d4370"/>
<rect x="868" y="833" width="1.500" height="167" fill="#1d4370"/>

<!-- Bottom timeline -->
<rect y="835" width="868" height="165" fill="#232323"/>
<rect x="6" y="840" width="7" height="7" fill="#c0ac80"/><text x="21" y="848" class="m" style="fill:#999">Comp 1</text>
<text x="76" y="848" class="s">×</text>
<rect x="87" y="840" width="7" height="7" fill="#c0ac80"/><text x="102" y="848" class="m w">Comp 2</text>
<path d="M136 843h6M136 845.500h6M136 848h6" stroke="#aaa"/><rect x="76" y="852" width="67" height="1.200" fill="#ccc"/>
<text x="-3" y="868" style="font-size:10px;font-weight:bold;fill:#4f96dc">0:00:00:57</text>
<text x="-1" y="876" class="s" style="fill:#2f6aa6">00057 (60.00 fps)</text>
<rect x="60" y="861" width="185" height="12" fill="#151515"/>
<circle cx="68" cy="866" r="2.500" fill="none" stroke="#aaa"/><path d="M66 868l-2 2M72 868h3" stroke="#aaa"/>
<use href="#tli" transform="translate(258 867) scale(1.090)"/>
<rect y="881" width="380" height="12" fill="#292929"/><rect y="880" width="380" height="1" fill="#131313"/>
<path d="M3 885l3-2v8l-3-2zM7 885v4" stroke="#bbb" fill="#bbb" stroke-width=".6"/><circle cx="17" cy="887" r="2" fill="#bbb"/><path d="M25 886h5v4h-5zM26 886v-1.500a1.500 1.500 0 0 1 3 0v1.500" fill="#bbb" stroke="#bbb" stroke-width=".6"/>
<path d="M46 883h3l5 5-3 3-5-5z" fill="#bbb"/>
<text x="63" y="890" class="s" style="fill:#777">#</text><text x="87" y="890" class="s" style="fill:#777;font-size:6.800px">Source Name</text><text x="180" y="890" class="s" style="fill:#777;font-size:6.800px">Mode</text><text x="235" y="890" class="s" style="fill:#777">T</text><text x="247" y="890" class="s" style="fill:#777;font-size:6.800px">TrkMat</text><text x="299" y="890" class="s" style="fill:#777;font-size:6.800px">Parent &amp; Link</text>
<path d="M59 882v10M82 882v10M176 882v10M230 882v10M242 882v10M295 882v10M378 882v10" stroke="#1a1a1a"/>
<!-- rows -->
<rect y="894" width="380" height="13" fill="#2b2b2b"/>
<rect x="12" y="895" width="11" height="11" fill="#272727"/><rect x="25" y="895" width="8" height="11" fill="#272727"/>
<use href="#ch" x="43" y="900"/><rect x="49" y="896" width="9" height="9" fill="#7a7fe0"/>
<text x="64" y="903" class="m" style="font-size:7.800px;fill:#aaa">1</text>
<path d="M89 896l1.300 2.700 3 .4-2.200 2 .6 3-2.700-1.500-2.700 1.500.6-3-2.200-2 3-.4z" fill="#bbb"/>
<text x="98" y="903.500" class="m" style="fill:#aaa">Shape Layer 1</text>
<rect x="179" y="895" width="49" height="10" fill="#171717"/><text x="183" y="903" class="m w">Normal</text><use href="#ch" x="222" y="900"/>
<rect x="232" y="895" width="9" height="10" fill="#222"/>
<use href="#sw" x="303" y="899"/><rect x="313" y="895" width="63" height="10" fill="#171717"/><text x="317" y="903" class="m w">None</text><use href="#ch" x="370" y="900"/>
<use href="#ch" x="56" y="913"/><text x="64" y="916" class="m" style="fill:#999">Contents</text>
<text x="265" y="916" class="m" style="fill:#999">Add:</text><circle cx="288" cy="912.500" r="3.800" fill="#ddd"/><path d="M287 910.500l2.500 2-2.500 2z" fill="#222"/>
<path d="M65 923l2 2-2 2" class="ic"/><text x="76" y="928" class="m" style="fill:#999">Rectangle 1</text>
<rect x="182" y="920" width="109" height="10" fill="#171717"/><text x="185" y="928" class="m w">Normal</text><use href="#ch" x="285" y="925"/>
<path d="M53 935l2 2-2 2" class="ic"/><text x="64" y="940" class="m" style="fill:#999">Transform</text><text x="180" y="940" class="m b">Reset</text>
<rect y="943" width="380" height="12" fill="#3a3a3a"/>
<rect x="0" y="943" width="40" height="12" fill="#444"/>
<use href="#ch" x="43" y="949"/><rect x="49" y="945" width="9" height="9" fill="#c03838"/>
<text x="64" y="952" class="m" style="font-size:7.800px">2</text>
<text x="86" y="953" style="font-family:'Liberation Serif',serif;font-weight:bold;font-size:9px;fill:#bbb">T</text>
<rect x="96" y="944" width="80" height="11" fill="#a4a4a4"/><text x="99" y="952.500" class="m" style="fill:#222">Hello</text>
<rect x="179" y="944" width="49" height="10" fill="#171717"/><text x="183" y="952" class="m w">Normal</text><use href="#ch" x="222" y="949"/>
<rect x="232" y="944" width="13" height="10" fill="#333"/>
<rect x="246" y="944" width="45" height="10" fill="#171717"/><text x="250" y="952" class="m w">None</text><use href="#ch" x="286" y="949"/>
<rect x="293" y="943" width="19" height="12" fill="#555"/><use href="#sw" x="303" y="949"/>
<rect x="313" y="944" width="63" height="10" fill="#171717"/><text x="317" y="952" class="m w">None</text><use href="#ch" x="370" y="949"/>
<path d="M6 959l3 3-3 3-3-3z" fill="none" stroke="#aaa"/><path d="M15 959l4 3-4 3z" fill="#aaa"/>
<circle cx="78.500" cy="962" r="3.500" fill="none" stroke="#3f86c8"/><path d="M78.500 960v2.500M77 957.500h3" stroke="#3f86c8"/>
<path d="M88 958v7h7M90 964l2-3 2 2" fill="none" stroke="#aaa"/>
<text x="101" y="965" class="m" style="fill:#888">Position</text>
<text x="180" y="964.500" class="m b">940,0,508,2</text><use href="#sw" x="312" y="961"/>
<rect y="967" width="380" height="13" fill="#2b2b2b"/>
<path d="M3 971l3-2v8l-3-2zM7 971v4" stroke="#bbb" fill="#bbb" stroke-width=".6"/>
<rect x="12" y="968" width="11" height="11" fill="#272727"/><rect x="25" y="968" width="8" height="11" fill="#272727"/>
<use href="#ch" x="43" y="973"/><rect x="49" y="969" width="9" height="9" fill="#b8dcd0"/>
<text x="64" y="976" class="m" style="font-size:7.800px;fill:#aaa">3</text>
<path d="M87 969h5l2 2v7h-7z" fill="#ccc"/><circle cx="90" cy="974" r="1.500" fill="#333"/>
<text x="98" y="976.500" class="m" style="fill:#aaa">ALA_4215.MP4</text>
<rect x="179" y="968" width="49" height="10" fill="#171717"/><text x="183" y="976" class="m w">Normal</text><use href="#ch" x="222" y="973"/>
<rect x="232" y="968" width="9" height="10" fill="#222"/>
<rect x="246" y="968" width="45" height="10" fill="#171717"/><text x="250" y="976" class="m w">None</text><use href="#ch" x="286" y="973"/>
<use href="#sw" x="303" y="973"/><rect x="313" y="968" width="63" height="10" fill="#171717"/><text x="317" y="976" class="m w">None</text><use href="#ch" x="370" y="973"/>
<path d="M53 984l2 2-2 2" class="ic"/><text x="64" y="989" class="m" style="fill:#999">Effects</text>
<path d="M53 996l2 2-2 2" class="ic"/><text x="64" y="1000" class="m" style="fill:#999">Transform</text><text x="180" y="1000" class="m b">Reset</text>
<!-- graph -->
<rect x="381" y="835" width="487" height="165" fill="#222"/>
<rect x="391" y="860" width="465" height="5.500" fill="#6c6c6c"/><circle cx="394" cy="862.500" r="2.800" fill="#5b7fd8"/><path d="M854 859.500l3 3-3 3z" fill="#3a86e0"/><rect x="851" y="859.500" width="4" height="6" fill="#3a86e0"/>
<g style="fill:#999"><text x="391" y="874.500" style="fill:#aaa">0:00s</text><text x="480" y="874.500" style="fill:#aaa">02s</text><text x="525" y="874.500" style="fill:#aaa">03s</text><text x="570" y="874.500" style="fill:#aaa">04s</text><text x="615" y="874.500" style="fill:#aaa">05s</text><text x="660" y="874.500" style="fill:#aaa">06s</text><text x="704" y="874.500" style="fill:#aaa">07s</text><text x="749" y="874.500" style="fill:#aaa">08s</text><text x="794" y="874.500" style="fill:#aaa">09s</text><text x="839" y="874.500" style="fill:#aaa">10s</text></g>
<path d="M486.500 876v2M531.500 876v2M575.500 876v2M620.500 876v2M665.500 876v2M710.500 876v2M755.500 876v2M799.500 876v2M844.500 876v2" stroke="#888"/>
<rect x="391" y="880" width="465" height="10.500" fill="#646464"/><rect x="393" y="880" width="4" height="10.500" fill="#6c7bd8"/><rect x="852" y="880" width="4" height="10.500" fill="#3a86e0"/>
<rect x="395" y="891" width="61" height="2" fill="#3f9a4a"/>
<rect x="391" y="893" width="465" height="107" fill="#2f2f2f"/>
<path d="M486.500 893v107M531.500 893v107M575.500 893v107M620.500 893v107M665.500 893v107M710.500 893v107M755.500 893v107M799.500 893v107M844.500 893v107M391 906.500h465M391 981.500h465" class="g"/>
<path d="M439.500 860v140" stroke="#3f72ae" stroke-width="1"/>
<path d="M435 871a4.500 4.500 0 0 1 9 0c0 2-2 4-4.500 7c-2.500-3-4.500-5-4.500-7z" fill="#2f80d8"/>
<text x="398" y="905" style="fill:#bbb">1000 px/sec</text><text x="398" y="980" style="fill:#999">500</text>
<path d="M402 1000c1-30 3-80 4.500-94c1.500 14 4 60 10.500 94" fill="none" stroke="#dcdcdc" stroke-width="1"/>
<circle cx="437" cy="885" r="36.500" fill="none" stroke="#a32a32" stroke-width="7.500" opacity=".72"/>
<path d="M858 883h9v5l-4.500 4-4.500-4z" fill="#ddd"/>
<path d="M858 900l3-3h5v6h-3l-2 2h-3z" fill="#ccc" stroke="#222" stroke-width=".5"/>

<!-- RIGHT PANELS -->
<rect x="871" y="526" width="129" height="474" fill="#272727"/>
<rect x="870" y="630" width="130" height="1" fill="#161616"/><rect x="870" y="673" width="130" height="1" fill="#161616"/><rect x="870" y="831" width="130" height="1.500" fill="#161616"/>
<rect x="870" y="526" width="2" height="474" fill="#1c1c1c"/>
<text x="880.500" y="540" class="m w">Info</text><path d="M901 535h5M901 537.500h5M901 540h5" stroke="#999"/><rect x="880" y="545" width="27" height="1" fill="#ccc"/>
<text x="923" y="540" class="m" style="fill:#888">Audio</text>
<rect x="878" y="560" width="14" height="14" fill="#000"/>
<g class="s"><text x="896" y="558" style="font-size:7px;fill:#888">R :</text><text x="896" y="567.500" style="font-size:7px;fill:#888">G :</text><text x="896" y="577" style="font-size:7px;fill:#888">B :</text><text x="896" y="587" style="font-size:7px;fill:#888">A :  0</text>
<text x="961" y="558" style="font-size:7px;fill:#888">X : 736</text><text x="961" y="567.500" style="font-size:7px;fill:#888">Y : 1336</text></g>
<path d="M955.500 567v9M951 571.500h9" stroke="#bbb"/>
<text x="881" y="645" class="m w">Preview</text><path d="M916 640h5M916 642.500h5M916 645h5" stroke="#999"/>
<g fill="#bbb"><path d="M906 658v7h1v-7zM914 658l-6 3.500 6 3.500zM923 658v7h1.500v-7zM932 658l-6 3.500 6 3.500zM942 657.500l8 4-8 4zM957 658v7h1.500v-7zM960 658l6 3.500-6 3.500zM975 658l6 3.500-6 3.500zM982 658v7h1v-7z"/></g>
<text x="878" y="688" class="m" style="fill:#777">Libraries</text><text x="937" y="688" class="m w">Character</text><path d="M978 683h5M978 685.500h5M978 688h5" stroke="#999"/><rect x="937" y="692" width="47" height="1" fill="#ccc"/>
<rect x="876" y="702" width="74" height="11" fill="#171717"/><rect x="951" y="702" width="10" height="11" fill="#171717"/><use href="#ch" x="956" y="707"/><text x="881" y="711" class="m w">Roboto</text>
<rect x="876" y="719" width="74" height="12" fill="#171717"/><rect x="951" y="719" width="10" height="12" fill="#171717"/><use href="#ch" x="956" y="725"/><text x="881" y="728" class="m w">Black</text>
<path d="M969 714l6-7 3 3-7 5zM976 705l3 3" fill="none" stroke="#ccc" stroke-width="1.200"/>
<rect x="966.500" y="719" width="15" height="12" fill="#fff" stroke="#888" stroke-width=".5"/><rect x="967" y="719.500" width="14" height="5.500" fill="#000"/>
<rect x="985" y="701" width="15" height="21" fill="#fff"/>
<rect x="986" y="723" width="7" height="7" fill="#ddd"/><path d="M986 730l7-7M995 730l5-7" stroke="#b33"/>
<g style="font-size:7.500px">
<text x="875" y="751" style="font-family:'Liberation Serif',serif;font-size:13px;fill:#bbb;font-weight:bold">T</text>
<text x="893" y="748" class="m b">452 <tspan style="fill:#888">px</tspan></text><text x="923" y="748" class="s">▼</text>
<path d="M957 740l4 10h-8zM952 752h10" fill="none" stroke="#aaa"/>
<text x="974" y="748" class="m b">83 <tspan style="fill:#888">px</tspan></text>
<text x="875" y="764" class="m" style="fill:#bbb">VA</text><text x="894" y="763" class="m" style="fill:#555">Metrics</text><text x="923" y="763" class="s">▼</text>
<rect x="953" y="757" width="12" height="9" fill="#bbb"/><text x="954" y="764.500" style="font-size:7px;fill:#222">VA</text><path d="M953 768h12" stroke="#aaa"/>
<text x="974" y="763" class="m b">0</text>
<path d="M877 778h10M877 781.500h10M877 785h10" stroke="#bbb" stroke-width="1.300"/>
<text x="893" y="785" class="m" style="fill:#888">- px</text><text x="923" y="784" class="s">▼</text>
<rect x="935" y="777" width="65" height="11" fill="#1f1f1f"/>
<text x="876" y="811" style="font-family:'Liberation Serif',serif;font-size:13px;fill:#bbb;font-weight:bold">T</text>
<text x="893" y="807" class="m b">99 <tspan style="fill:#888">%</tspan></text><text x="923" y="807" class="s">▼</text>
<text x="952" y="811" style="font-family:'Liberation Serif',serif;font-size:13px;fill:#bbb;font-weight:bold">T</text>
<text x="974" y="807" class="m b">100 <tspan style="fill:#888">%</tspan></text>
<text x="876" y="823" class="m" style="fill:#999">A</text><text x="893" y="822" class="m b">0 <tspan style="fill:#888">px</tspan></text><text x="923" y="822" class="s">▼</text>
<text x="953" y="823" class="m" style="font-family:'Liberation Sans','Noto Sans CJK JP',sans-serif;fill:#999">あ</text><text x="974" y="822" class="m b">0 <tspan style="fill:#888">%</tspan></text>
</g>
<text x="881" y="848" class="m w">Paragraph</text><path d="M923 843h5M923 845.500h5M923 848h5" stroke="#999"/>
<rect x="877" y="859" width="14" height="14" fill="#13243a"/>
<path d="M879 862h10M879 864.500h7M879 867h10M879 869.500h7" stroke="#4d90d8"/>
<path d="M897 862h10M898 864.500h8M897 867h10M898 869.500h8M915 862h10M918 864.500h7M915 867h10M918 869.500h7" stroke="#aaa"/>
<path d="M937 862h10M937 864.500h10M937 867h10M937 869.500h10M956 862h10M956 864.500h10M956 867h10M956 869.500h10M974 862h10M974 864.500h10M974 867h10M974 869.500h10M994 862h6M994 864.500h6M994 867h6M994 869.500h6" stroke="#3d3d3d"/>
<rect x="870" y="874" width="130" height="1" fill="#1a1a1a"/>
<path d="M878 886h3M883 883h4M883 886h4M883 889h4" stroke="#aaa"/>
<text x="892" y="888" class="m b" style="font-size:7.500px">0 <tspan style="fill:#888">px</tspan></text>
<path d="M930 885h3M935 883h7v4h-7zM935 890h7" stroke="#aaa" fill="none"/>
<text x="944" y="888" class="m b" style="font-size:7.500px">0 <tspan style="fill:#888">px</tspan></text>
<path d="M977 883h3M982 884h5M982 887h5M982 890h5" stroke="#888"/>
<text x="991" y="888" class="m b" style="font-size:7.500px">0 <tspan style="fill:#888">p</tspan></text>
<path d="M878 896h3v8h-3M884 898h4M884 901h4" stroke="#aaa" fill="none"/>
<text x="892" y="901" class="m b" style="font-size:7.500px">0 <tspan style="fill:#888">px</tspan></text>
<path d="M930 900h3M935 896h7M935 899h7M935 902h7v3h-7z" stroke="#aaa" fill="none"/>
<text x="944" y="902" class="m b" style="font-size:7.500px">-4 <tspan style="fill:#888">px</tspan></text>
<rect x="976" y="893" width="13" height="14" fill="#13243a"/><path d="M978 900l3-3v6zM983 896h4v8h-2v-5h-2z" fill="#4d90d8"/>
<path d="M994 896h5v8h-2v-4h-3z" fill="#aaa"/>
</svg>
</body></html>
